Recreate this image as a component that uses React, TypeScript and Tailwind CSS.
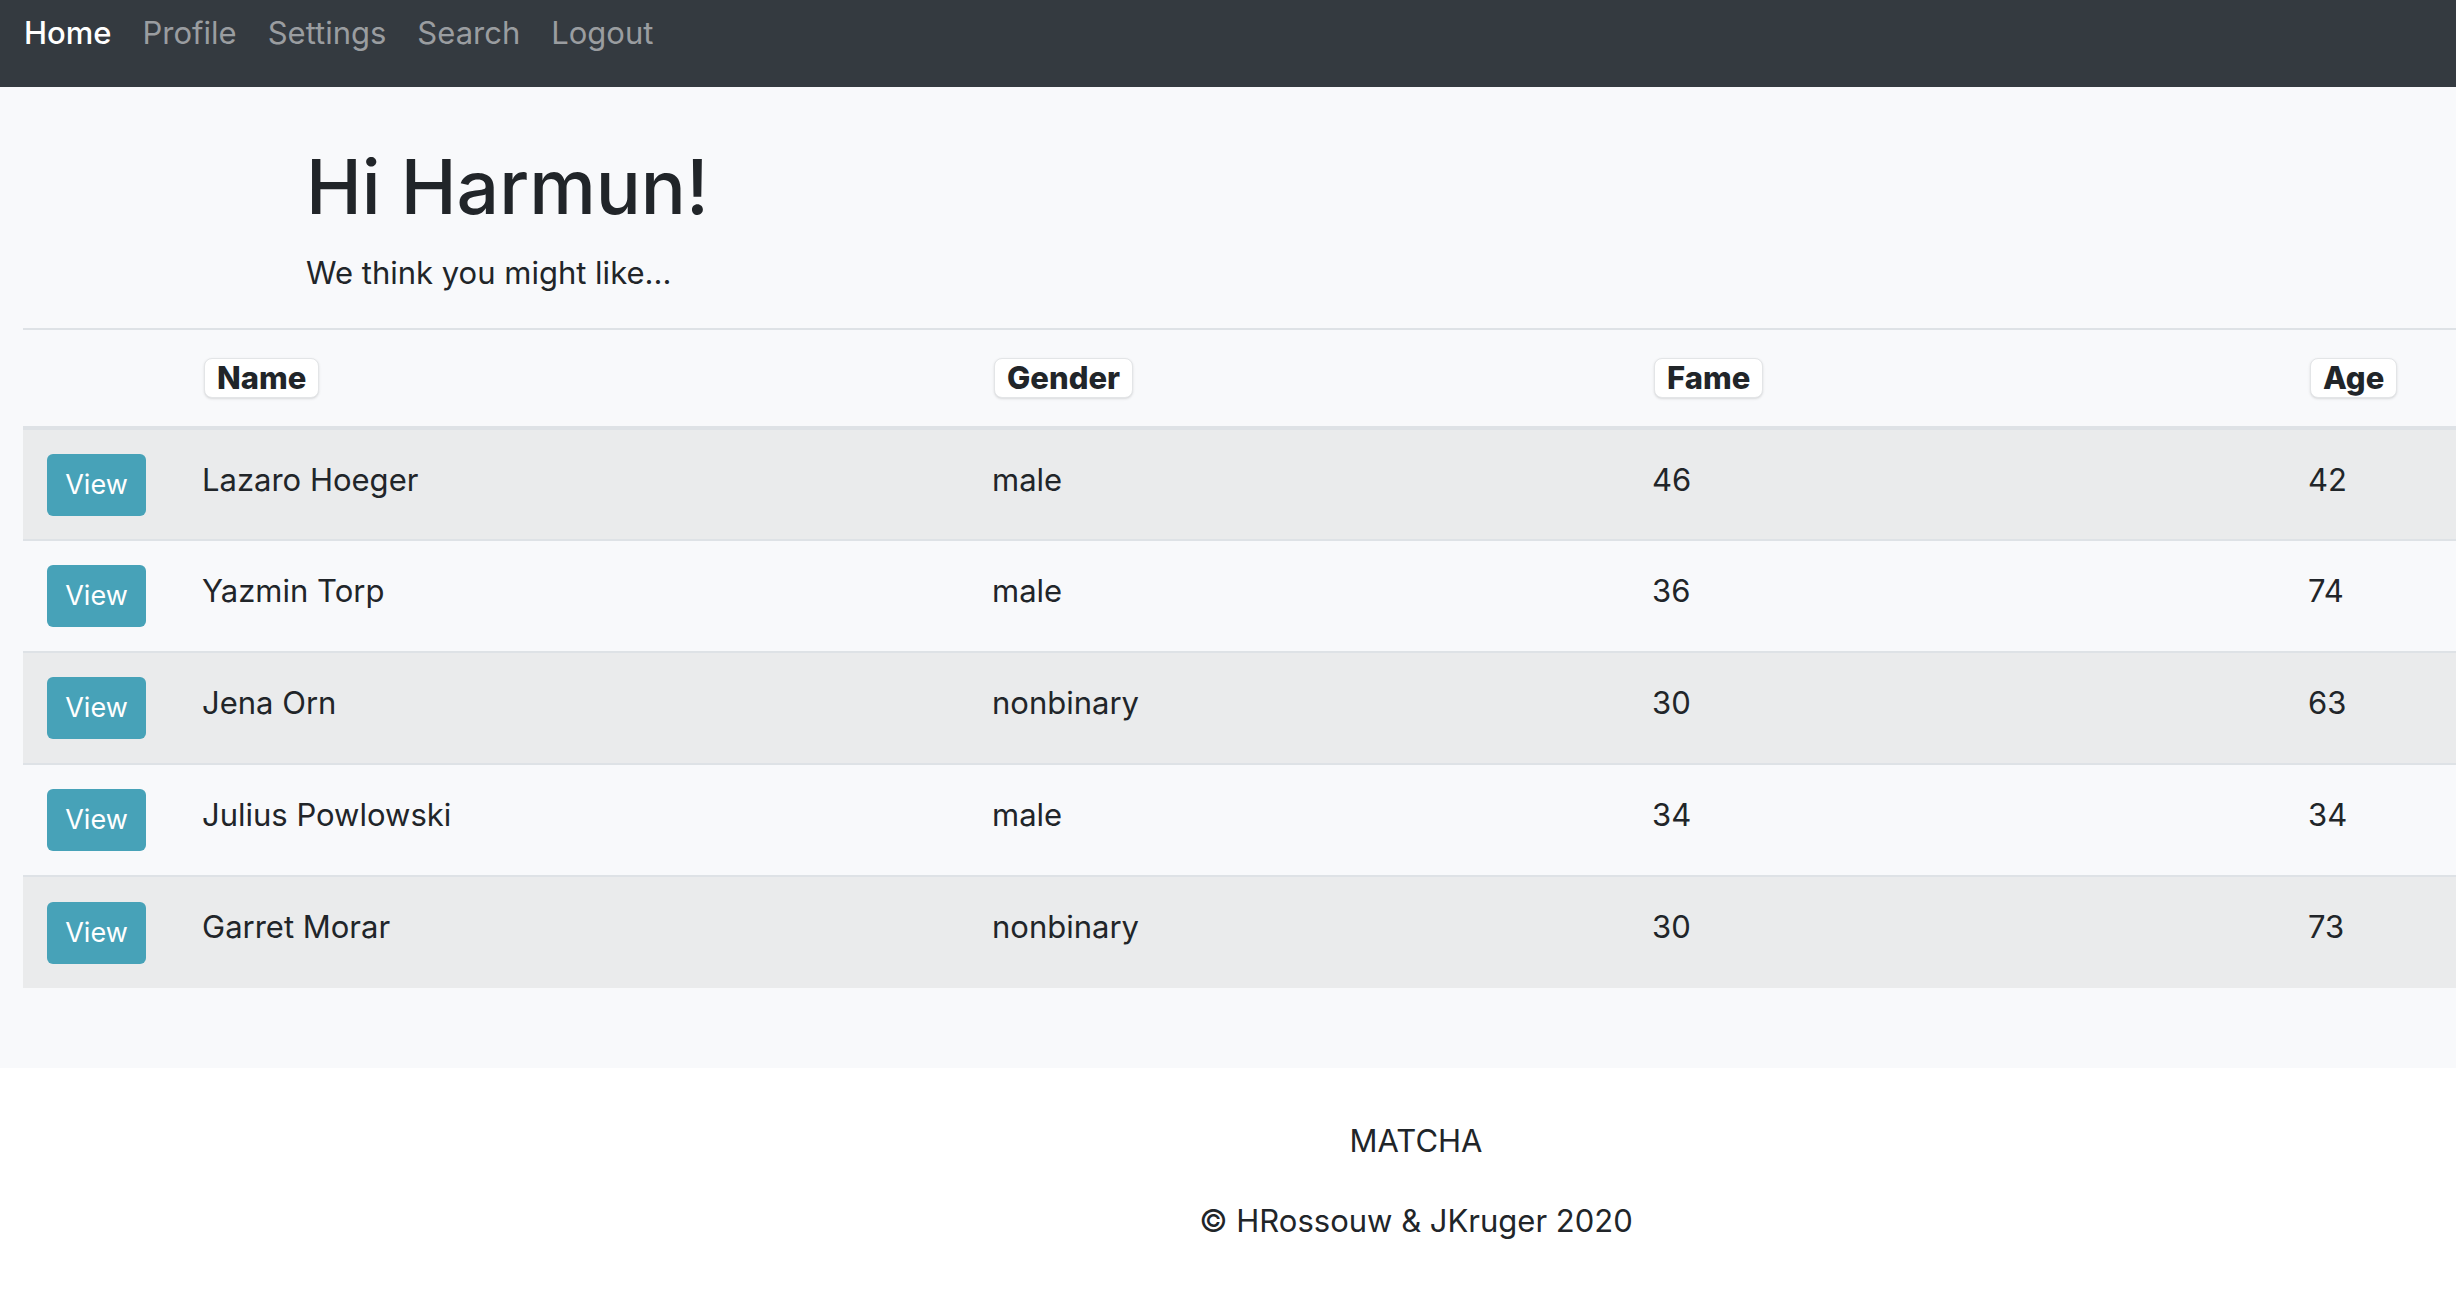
const nav = ["Home", "Profile", "Settings", "Search", "Logout"];
const cols = [
  { label: "Name", width: "w-[790px]" },
  { label: "Gender", width: "w-[660px]" },
  { label: "Fame", width: "w-[656px]" },
  { label: "Age", width: "" },
];
const rows = [
  ["Lazaro Hoeger", "male", "46", "42"],
  ["Yazmin Torp", "male", "36", "74"],
  ["Jena Orn", "nonbinary", "30", "63"],
  ["Julius Powlowski", "male", "34", "34"],
  ["Garret Morar", "nonbinary", "30", "73"],
];

export default function App() {
  return (
    <div className="min-h-screen overflow-x-hidden bg-white font-['Inter',sans-serif] text-[31px] leading-[48px] text-[#212529]">
      <nav className="flex h-[87px] items-start gap-[31px] bg-[#343a40] px-6 pt-[9px]">
        {nav.map((n, i) => (
          <a key={n} href="#" className={i === 0 ? "font-medium text-white" : "text-[#9a9da0]"}>
            {n}
          </a>
        ))}
      </nav>
      <main className="bg-[#f8f9fb] pb-20 pl-[23px]">
        <header className="pt-[52px] pl-[283px]">
          <h1 className="text-[75px] leading-[96px] font-medium">Hi Harmun!</h1>
          <p className="mt-3.5 pb-[31px]">We think you might like...</p>
        </header>
        <table className="w-full table-fixed border-collapse text-left">
          <thead>
            <tr className="h-[99px] border-t-2 border-b-4 border-[#dee2e6]">
              <td className="w-[155px]" />
              {cols.map((c) => (
                <th key={c.label} className={`${c.width} px-6 align-middle`}>
                  <button className="mx-0.5 block rounded-lg border border-[#e3e5e7] bg-white px-3 leading-[38px] font-extrabold shadow-sm">
                    {c.label}
                  </button>
                </th>
              ))}
            </tr>
          </thead>
          <tbody>
            {rows.map((r) => (
              <tr key={r[0]} className="h-28 border-t-2 border-[#dee2e6] odd:bg-[#eaebec]">
                <td className="px-6 align-middle">
                  <button className="block h-[62px] w-[99px] rounded-md bg-[#47a2b8] text-[27px] text-white">View</button>
                </td>
                {r.map((v, i) => (
                  <td key={i} className="px-6 pt-[26px] align-top">
                    {v}
                  </td>
                ))}
              </tr>
            ))}
          </tbody>
        </table>
      </main>
      <footer className="flex flex-col items-center gap-8 pt-[49px] pl-[376px]">
        <p>MATCHA</p>
        <p>© HRossouw &amp; JKruger 2020</p>
      </footer>
    </div>
  );
}
